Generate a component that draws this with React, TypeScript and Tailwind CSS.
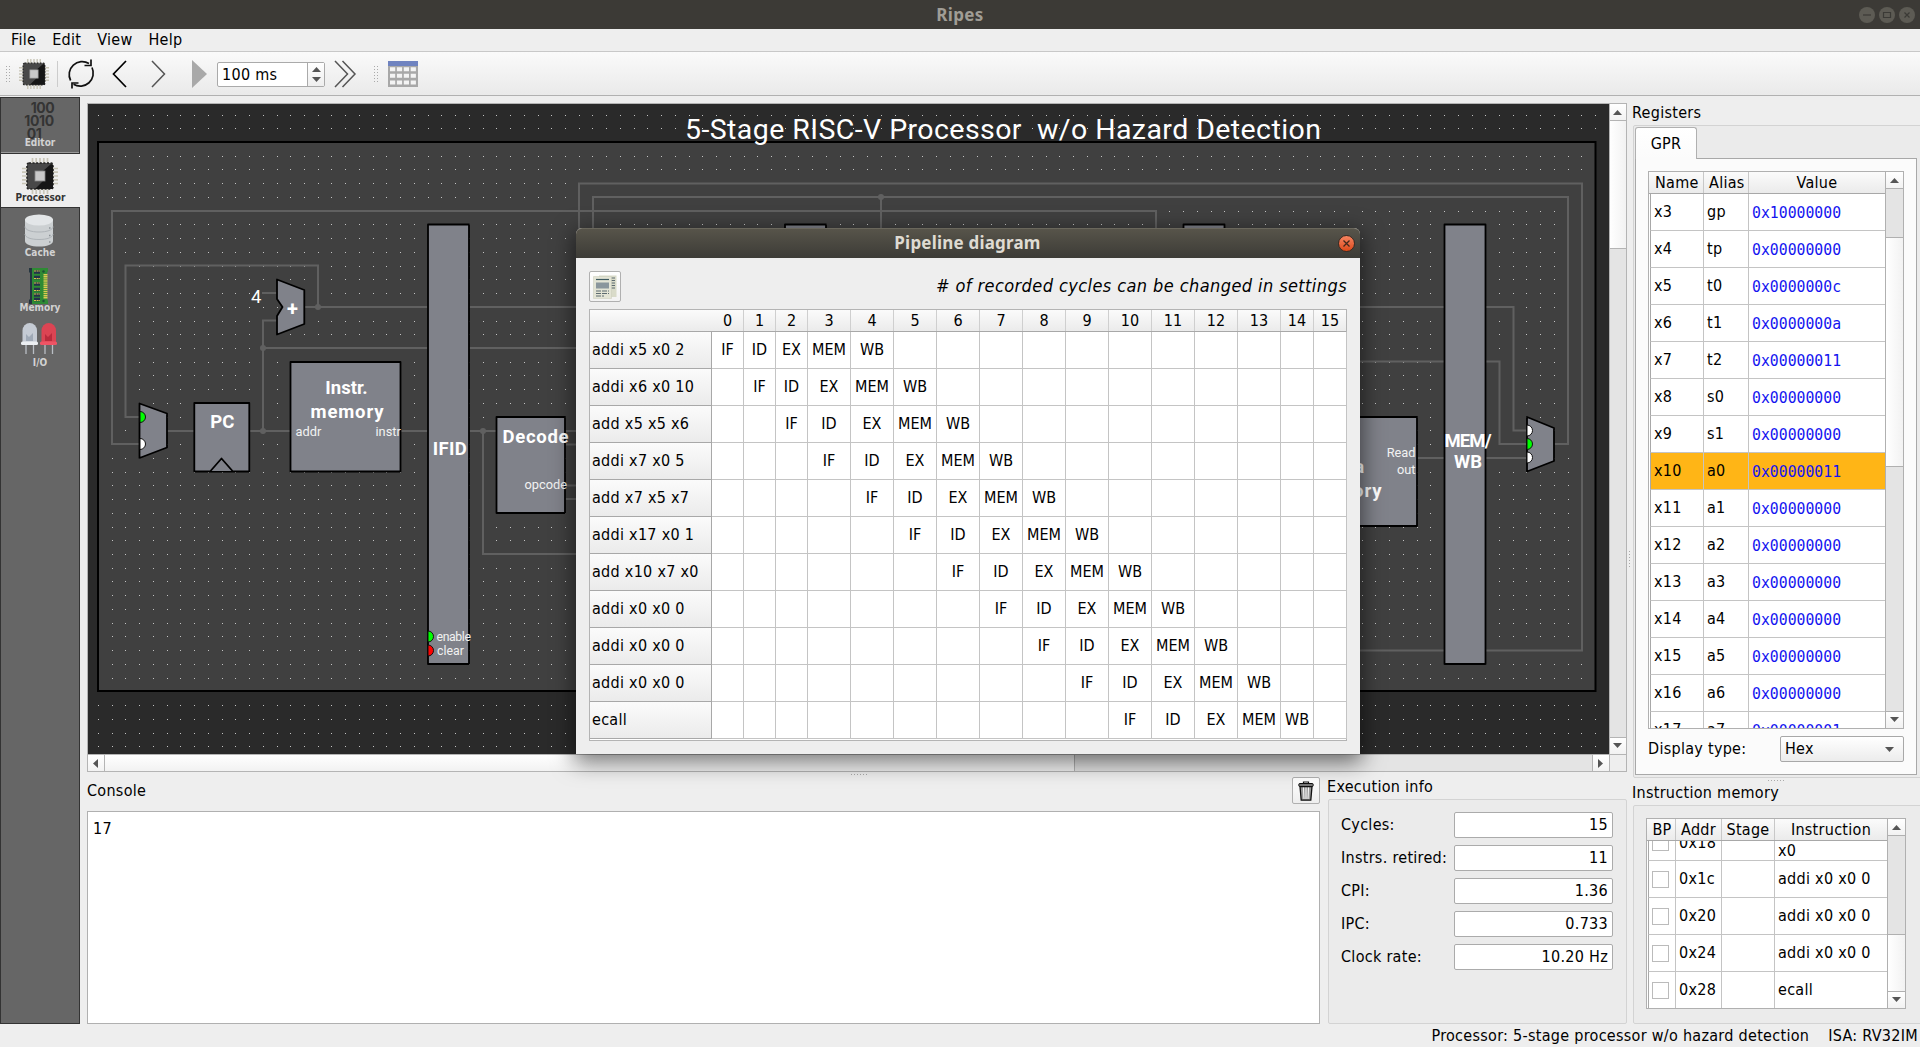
import React from "react";

const UI = "font-['DejaVu_Sans_Condensed','DejaVu_Sans',sans-serif] [font-stretch:condensed] tracking-[.29px]";

const STAGES = ["IF", "ID", "EX", "MEM", "WB"];
const INSTRUCTIONS = [
  "addi x5 x0 2",
  "addi x6 x0 10",
  "add x5 x5 x6",
  "addi x7 x0 5",
  "add x7 x5 x7",
  "addi x17 x0 1",
  "add x10 x7 x0",
  "addi x0 x0 0",
  "addi x0 x0 0",
  "addi x0 x0 0",
  "ecall",
];
const REGISTERS: [string, string, string][] = [
  ["x3", "gp", "0x10000000"],
  ["x4", "tp", "0x00000000"],
  ["x5", "t0", "0x0000000c"],
  ["x6", "t1", "0x0000000a"],
  ["x7", "t2", "0x00000011"],
  ["x8", "s0", "0x00000000"],
  ["x9", "s1", "0x00000000"],
  ["x10", "a0", "0x00000011"],
  ["x11", "a1", "0x00000000"],
  ["x12", "a2", "0x00000000"],
  ["x13", "a3", "0x00000000"],
  ["x14", "a4", "0x00000000"],
  ["x15", "a5", "0x00000000"],
  ["x16", "a6", "0x00000000"],
  ["x17", "a7", "0x00000001"],
];
const INFO: [string, string][] = [
  ["Cycles:", "15"],
  ["Instrs. retired:", "11"],
  ["CPI:", "1.36"],
  ["IPC:", "0.733"],
  ["Clock rate:", "10.20 Hz"],
];
const MEMORY: [string, string][] = [
  ["0x1c", "addi x0 x0 0"],
  ["0x20", "addi x0 x0 0"],
  ["0x24", "addi x0 x0 0"],
  ["0x28", "ecall"],
];

function Arrow({ dir }: { dir: "up" | "down" | "left" | "right" }) {
  const d = {
    up: "M0 5 L4.5 0 L9 5Z",
    down: "M0 0 L9 0 L4.5 5Z",
    left: "M5 0 L5 9 L0 4.5Z",
    right: "M0 0 L5 4.5 L0 9Z",
  }[dir];
  const vertical = dir === "up" || dir === "down";
  return (
    <svg width={vertical ? 9 : 5} height={vertical ? 5 : 9} fill="#555">
      <path d={d} />
    </svg>
  );
}

function Chip({ size }: { size: number }) {
  return (
    <svg width={size} height={size} viewBox="0 0 36 36">
      <path
        d="M10.5 0V36M14.2 0V36M18 0V36M21.8 0V36M25.5 0V36M0 10.5H36M0 14.2H36M0 18H36M0 21.8H36M0 25.5H36"
        stroke="#c9c6b8"
        strokeWidth="1.7"
      />
      <path
        d="M7 5H29A2 2 0 0 1 31 7V29A2 2 0 0 1 29 31H7A2 2 0 0 1 5 29V7A2 2 0 0 1 7 5Z"
        fill="#484848"
        stroke="#222"
        strokeWidth="1.6"
        strokeDasharray="2 1.6"
      />
      <path d="M31 7V31H13L21 23V13L29 6Z" fill="#161616" />
      <rect x="13" y="13" width="10" height="10" fill="#c9c9c9" stroke="#888" strokeWidth=".8" />
    </svg>
  );
}

function CacheIcon() {
  return (
    <svg width="36" height="36" viewBox="0 0 36 36">
      <path d="M4 6V28C4 31.500 10 33.500 18 33.500S32 31.500 32 28V6Z" fill="#ccd0d2" />
      <path d="M4 13.500C4 17 10 19 18 19S32 17 32 13.500M4 21C4 24.500 10 26.500 18 26.500S32 24.500 32 21" fill="none" stroke="#aeb3b7" strokeWidth="1" />
      <ellipse cx="18" cy="7" rx="14" ry="5.500" fill="#e3e6e8" />
      <path d="M28 15h1.500M28 22.500h1.500M28 29h1.500" stroke="#8b9196" strokeWidth="1.400" />
    </svg>
  );
}

function MemoryIcon() {
  return (
    <svg width="36" height="36" viewBox="0 0 36 36">
      <path d="M8 0H11V36H8V32L9 31V5L8 4Z" fill="#253540" />
      <path d="M11 0H27V3L26 5V31L27 33V36H11Z" fill="#2e8a34" />
      <path d="M13 4H19M13 9.500H19M13 16H19M13 21.500H19M13 27H19M13 31.500H19" stroke="#24324a" strokeWidth="3.600" />
      <path d="M13 3H19M13 10.500H19M13 15H19M13 22.500H19M13 26H19M13 32.500H19" stroke="#d9c04f" strokeWidth="1.100" strokeDasharray="2 .6" />
      <path d="M24.500 6V31" stroke="#dcc952" strokeWidth="4" strokeDasharray="1.400 .7" />
      <circle cx="22.500" cy="3.500" r="1.200" fill="#1f4d35" />
      <circle cx="22.500" cy="33" r="1.200" fill="#1f4d35" />
    </svg>
  );
}

function IoIcon() {
  return (
    <svg width="36" height="36" viewBox="0 0 36 36">
      <path d="M5 21V31M12.500 21V31M24 21V31M31.500 21V31" stroke="#b9bec4" strokeWidth="1.300" />
      <path d="M1.500 20V7.500A7.250 7.500 0 0 1 16 7.500V20Z" fill="#c5cbd4" />
      <path d="M5 18V11L8 14L12 10V18Z" fill="#9fa9b6" />
      <rect x="0" y="18.500" width="17" height="3.500" rx="1.500" fill="#eceff2" />
      <path d="M20.500 20V7.500A7.250 7.500 0 0 1 35 7.500V20Z" fill="#dc4453" />
      <path d="M24 18V11L27 14L31 10V18Z" fill="#b92b3c" />
      <rect x="19" y="18.500" width="17" height="3.500" rx="1.500" fill="#ee5465" />
    </svg>
  );
}

function EditorIcon() {
  return (
    <div className="flex h-9 w-9 flex-col items-center font-[Inter,sans-serif] text-[14px] leading-[13px] font-bold tracking-[-0.4px] whitespace-pre text-[#343434]">
      <div className="-mt-0.5 pl-[7px]">100</div>
      <div>1010</div>
      <div className="pr-[10px]">01</div>
    </div>
  );
}

function Sidebar() {
  const items: [string, React.ReactNode][] = [
    ["Editor", <EditorIcon key="e" />],
    ["Processor", <Chip key="p" size={36} />],
    ["Cache", <CacheIcon key="c" />],
    ["Memory", <MemoryIcon key="m" />],
    ["I/O", <IoIcon key="i" />],
  ];
  return (
    <div className="mt-px h-[927px] w-20 border border-[#333] bg-[#666]">
      {items.map(([label, icon]) => (
        <div
          key={label}
          className={
            "flex h-[55px] flex-col items-center pr-0.5 " +
            (label === "Processor"
              ? "-mr-px border-y border-b-[#333] border-t-[#333] bg-[#eee] pt-[4px] text-[#333]"
              : label === "Editor"
                ? "border-b border-b-[#999] pt-[5px] text-[#d2d2d2]"
                : "pt-[5px] text-[#d2d2d2]")
          }
        >
          {icon}
          <div className="-mt-[2px] ml-[2px] font-['DejaVu_Sans',sans-serif] text-[10px] leading-3 font-bold tracking-normal">
            {label}
          </div>
        </div>
      ))}
    </div>
  );
}

function Handle() {
  return (
    <svg width="5" height="17" viewBox="0 0 5 17">
      <path d="M.5 0V17M3.500 0V17" stroke="#aaa" strokeDasharray="1 2" />
    </svg>
  );
}

function Toolbar() {
  return (
    <div className="flex h-[45px] items-center border-t border-b border-t-[#c8c8c8] border-b-[#b1b1b1] bg-linear-to-b from-[#fafafa] to-[#eaeaea] pt-px pl-1.5">
      <Handle />
      <div className="ml-2 flex w-[30px]">
        <Chip size={30} />
      </div>
      <div className="ml-2 h-[26px] w-px bg-[#ccc]" />
      <svg className="ml-[9px]" width="29" height="30" viewBox="0 0 29 30" fill="none" stroke="#111" strokeWidth="1.700">
        <path d="M3.600 21.500A13 13 0 0 1 22 4.500M25 8.500A13 13 0 0 1 6.500 25.200" />
        <path d="M24 .5V6.500H17.500M5 29.500V24H11.500" />
      </svg>
      <svg className="ml-4" width="15" height="28" viewBox="0 0 15 28" fill="none" stroke="#000" strokeWidth="1.700">
        <path d="M14 1L1.500 14L14 27" />
      </svg>
      <svg className="ml-6" width="15" height="28" viewBox="0 0 15 28" fill="none" stroke="#555" strokeWidth="1.500">
        <path d="M1 1L13.500 14L1 27" />
      </svg>
      <svg className="ml-[25px]" width="16" height="28" viewBox="0 0 16 28" fill="#a9a9a9">
        <path d="M1 0L16 14L1 28Z" />
      </svg>
      <div className="ml-[10px] flex h-[25px] w-[108px] items-center rounded-[2px] border border-[#aaa] bg-white text-[16px] leading-none">
        <span className="flex-1 pt-px pl-1">100 ms</span>
        <div className="flex h-full w-[17px] flex-col items-center justify-center gap-[5px] border-l border-[#aaa] bg-linear-to-b from-white to-[#eee]">
          <Arrow dir="up" />
          <Arrow dir="down" />
        </div>
      </div>
      <svg className="ml-[9px]" width="23" height="28" viewBox="0 0 23 28" fill="none" stroke="#555" strokeWidth="1.500">
        <path d="M1 1L13.500 14L1 27M8.500 1L21 14L8.500 27" />
      </svg>
      <div className="ml-[17px] flex">
        <Handle />
      </div>
      <svg className="ml-[9px]" width="30" height="26" viewBox="0 0 30 26">
        <rect width="30" height="26" fill="#a8a8a8" />
        <rect width="30" height="5" fill="#6f83c0" />
        <path d="M2 8.300H28M2 14.800H28M2 21.500H28" stroke="#f4f4f4" strokeWidth="4" strokeDasharray="5.200 1.700" />
      </svg>
    </div>
  );
}

/* Processor schematic */
const PITCH = 13.735;
let gridPath = "";
for (let r = 0; r < 47; r++) {
  if (r === 2 || r === 42) continue;
  for (let c = 0; c < 110; c++) {
    const inside = r > 2 && r < 42;
    if (inside && (c < 1 || c > 108)) continue;
    gridPath += `M${Math.floor(98.5 + c * PITCH)} ${Math.floor(115 + r * PITCH) + 0.5}h1`;
  }
}

function Port({ x, y, fill }: { x: number; y: number; fill: string }) {
  return <path d={`M${x} ${y - 5.5}A5.5 5.5 0 0 1 ${x} ${y + 5.5}Z`} fill={fill} stroke="#111" strokeWidth="1" />;
}

function Schematic() {
  return (
    <svg
      width="1521"
      height="650"
      viewBox="88 104 1521 650"
      className="block bg-[#2a2a2a] font-[Roboto,sans-serif] tracking-normal [font-stretch:normal]"
      fill="none"
    >
      <rect x="98" y="142" width="1497.500" height="549" fill="#404040" stroke="#000" strokeWidth="2" />
      <path d={gridPath} stroke="#c4c4c4" strokeWidth="1" shapeRendering="crispEdges" />
      <g stroke="#606060" strokeWidth="2">
        <path d="M140 444H112V211H1156V240" />
        <path d="M140 417H125.500V265.500H318V307" />
        <path d="M167 431H194M249 431H291M263 431V320.500H277M263 348H600M262 293H277M304 307H600M400 431H497" />
        <path d="M483 431V554H600M565 431H600M565 444.500H600M565 485.500H600M565 499H600" />
        <path d="M579 240V183.500H1582V650.500H1350" />
        <path d="M593 240V197H1568V444H1554M881 197V240" />
        <path d="M1350 307H1513.500V430.500H1527M1350 361.500H1499.500V444H1527M1417 458H1527" />
      </g>
      <g fill="#606060">
        <circle cx="318" cy="307" r="3" />
        <circle cx="263" cy="348" r="3" />
        <circle cx="263" cy="431" r="3" />
        <circle cx="483" cy="431" r="3" />
        <circle cx="881" cy="197" r="3" />
      </g>
      <g fill="#80828a" stroke="#000" strokeWidth="1.800" strokeLinejoin="round">
        <path d="M139.500 403.500L167 413.500V447.500L139.500 458Z" />
        <rect x="194.300" y="403" width="55" height="68.500" />
        <path d="M210.500 471L221.500 458.500L232.500 471" />
        <path d="M277 279.500L304.300 290V324L277 334.500V316L282.500 307L277 299Z" />
        <rect x="290.500" y="362" width="110" height="109.500" />
        <rect x="428" y="224.500" width="41" height="439.500" />
        <rect x="496.500" y="417" width="68.500" height="96" />
        <rect x="785" y="224.500" width="41" height="439.500" />
        <rect x="1183.500" y="224.500" width="41" height="439.500" />
        <rect x="1307" y="417" width="110" height="109" />
        <rect x="1444.500" y="224.500" width="41" height="439.500" />
        <path d="M1527 417L1554 428V461L1527 471.500Z" />
      </g>
      <Port x={140} y={417} fill="#0f0" />
      <Port x={140} y={444} fill="#fff" />
      <Port x={428} y={636.5} fill="#0f0" />
      <Port x={428} y={650.5} fill="#f00" />
      <Port x={1527} y={430.5} fill="#fff" />
      <Port x={1527} y={444} fill="#0f0" />
      <Port x={1527} y={457.5} fill="#fff" />
      <g fill="#fff" fontSize="18.500" fontWeight="700" textAnchor="middle">
        <text x="222.300" y="427.500">PC</text>
        <text x="346.500" y="393.800">Instr.</text>
        <text x="347" y="418" textLength="73">memory</text>
        <text x="449.800" y="454.800" textLength="34">IFID</text>
        <text x="535.500" y="442.500" textLength="66">Decode</text>
        <text x="1345" y="472.500">Data</text>
        <text x="1345" y="496.800" textLength="73">memory</text>
        <text x="1468" y="447" textLength="47">MEM/</text>
        <text x="1468" y="468">WB</text>
        <text x="292.500" y="316" fontSize="20">+</text>
        <text x="256.300" y="302.800" fontWeight="400">4</text>
      </g>
      <g fill="#f2f2f2" fontSize="12.800">
        <text x="295.500" y="436">addr</text>
        <text x="375.500" y="436">instr</text>
        <text x="524.500" y="489" textLength="42.500">opcode</text>
        <text x="436.500" y="641" textLength="34.500" fontSize="12.300">enable</text>
        <text x="437" y="655" fontSize="12.300">clear</text>
        <text x="1415.500" y="457" textAnchor="end">Read</text>
        <text x="1415.500" y="474" textAnchor="end">out</text>
      </g>
      <text x="685" y="138.500" fill="#fff" fontSize="28.500" textLength="636" xmlSpace="preserve" className="whitespace-pre">
        {"5-Stage RISC-V Processor  w/o Hazard Detection"}
      </text>
    </svg>
  );
}

const BTN = "flex shrink-0 items-center justify-center bg-linear-to-b from-white to-[#f2f2f2]";

function Canvas() {
  return (
    <div className="h-[669px] w-[1540px] border border-[#b4b4b4]">
      <div className="flex h-[650px]">
        <div className="w-[1521px]">
          <Schematic />
        </div>
        <div className="flex w-[17px] flex-col border-l border-[#b4b4b4] bg-[#e4e4e4]">
          <div className={BTN + " h-4 pr-px"}>
            <Arrow dir="up" />
          </div>
          <div className="h-[129px] border-y border-[#b4b4b4] bg-linear-to-r from-white to-[#f2f2f2]" />
          <div className="flex-1" />
          <div className={BTN + " h-[17px] border-t border-[#b4b4b4] pr-px pb-0.5"}>
            <Arrow dir="down" />
          </div>
        </div>
      </div>
      <div className="flex h-[17px] border-t border-[#b4b4b4] bg-[#e4e4e4]">
        <div className={BTN + " w-4 pr-0.5"}>
          <Arrow dir="left" />
        </div>
        <div className="w-[971px] border-x border-[#b4b4b4] bg-linear-to-b from-white to-[#f2f2f2]" />
        <div className="flex-1" />
        <div className={BTN + " w-[17px] border-l border-[#b4b4b4] pr-px"}>
          <Arrow dir="right" />
        </div>
        <div className="w-[17px] border-l border-[#b4b4b4] bg-[#eee]" />
      </div>
    </div>
  );
}

function Console() {
  return (
    <div className="w-[1233px]">
      <div className="flex h-[34px] items-start justify-between">
        <span className="leading-[27px]">Console</span>
        <div className="flex h-[27px] w-7 items-center justify-center rounded-[2px] border border-[#b0b0b0] bg-linear-to-b from-white to-[#eee]">
          <svg width="16" height="20" viewBox="0 0 16 20">
            <path d="M5.500 2.500V1H10.500V2.500" fill="none" stroke="#111" strokeWidth="1.200" />
            <path d="M2 5.500L3.200 19.200H12.800L14 5.500Z" fill="#999" stroke="#111" strokeWidth="1.300" />
            <path d="M5.500 6.500L6 18M8 6.500V18M10.500 6.500L10 18" stroke="#fff" strokeWidth="1" />
            <rect x=".8" y="2.500" width="14.400" height="3" rx="1" fill="#777" stroke="#111" strokeWidth="1" />
          </svg>
        </div>
      </div>
      <div className="h-[213px] border border-[#b0b0b0] bg-white px-[5px] pt-[7px] leading-5">17</div>
    </div>
  );
}

function ExecutionInfo() {
  return (
    <div className="w-[299px]">
      <div className="-ml-px h-[22px] leading-5">Execution info</div>
      <div className="flex h-[225px] flex-col gap-[7px] rounded-[2px] border border-[#d3d3d3] bg-[#ebebeb] pt-3 pr-[13px] pl-3">
        {INFO.map(([label, value]) => (
          <div key={label} className="flex h-[26px] items-center justify-between">
            <span>{label}</span>
            <span className="flex h-[26px] w-[159px] items-center justify-end rounded-[2px] border border-[#ababab] bg-white pr-1">
              {value}
            </span>
          </div>
        ))}
      </div>
    </div>
  );
}

const HEAD = "bg-linear-to-b from-[#fbfbfb] to-[#ebebeb]";

function Registers() {
  return (
    <div className="mt-0.5 h-[653px] w-[290px] rounded-[2px] border border-[#d3d3d3] bg-[#ebebeb] px-px pt-px">
      <div className="relative z-10 flex h-8 w-[62px] items-center justify-center rounded-t-[3px] border border-b-0 border-[#b0b0b0] bg-linear-to-b from-white to-[#fbfbfb]">
        GPR
      </div>
      <div className="-mt-px h-[617px] w-[282px] border border-[#a8a8a8] bg-[#fbfbfb] px-3 pt-3">
        <div className="flex h-[558px] w-64 overflow-hidden border border-[#b0b0b0] bg-white">
          <div className="w-[237px] shrink-0 border-r border-[#b0b0b0]">
            <div className={"flex h-[22px] border-b border-[#a8a8a8] leading-[21px] " + HEAD}>
              <div className="w-[55px] border-r border-[#c8c8c8] pl-[6px]">Name</div>
              <div className="w-[45px] border-r border-[#c8c8c8] pl-[5px]">Alias</div>
              <div className="flex-1 text-center">Value</div>
            </div>
            {REGISTERS.map(([n, a, v]) => (
              <div
                key={n}
                className={"ml-px flex h-[37px] border-b border-l border-b-[#c4c4c4] border-l-[#a8a8a8] leading-[36px] " + (n === "x10" ? "bg-[#ffb516]" : "bg-white")}
              >
                <div className="w-[53px] border-r border-[#c4c4c4] pl-[3px]">{n}</div>
                <div className="w-[45px] border-r border-[#c4c4c4] pl-[3px]">{a}</div>
                <div className="flex-1 pt-px pl-[3px] leading-[35px]">
                  <span className="inline-block origin-left scale-x-[.925] font-['DejaVu_Sans_Mono',monospace] text-[16px] tracking-normal [font-stretch:normal] text-[#1414f0]">
                    {v}
                  </span>
                </div>
              </div>
            ))}
          </div>
          <div className="flex w-[17px] flex-col bg-[#e4e4e4]">
            <div className={BTN + " h-[17px] border-b border-[#b0b0b0]"}>
              <Arrow dir="up" />
            </div>
            <div className="h-12" />
            <div className="h-[230px] border-y border-[#b0b0b0] bg-linear-to-r from-white to-[#f2f2f2]" />
            <div className="flex-1" />
            <div className={BTN + " h-[17px] border-t border-[#b0b0b0] pb-px"}>
              <Arrow dir="down" />
            </div>
          </div>
        </div>
        <div className="mt-[7px] flex items-center justify-between">
          <span>Display type:</span>
          <div className="flex h-[26px] w-[124px] items-center justify-between rounded-[2px] border border-[#a8a8a8] bg-linear-to-b from-white to-[#ececec] pr-[9px] pl-1">
            <span>Hex</span>
            <Arrow dir="down" />
          </div>
        </div>
      </div>
    </div>
  );
}

function InstructionMemory() {
  const cell = "border-r border-[#c4c4c4]";
  return (
    <div className="h-[219px] w-[290px] rounded-[2px] border border-[#d3d3d3] bg-[#ebebeb] pt-3 pl-3">
      <div className="flex h-[191px] w-[260px] border border-[#b0b0b0] bg-white">
        <div className="w-[241px] shrink-0 overflow-hidden border-r border-[#b0b0b0]">
          <div className={"flex h-[22px] border-b border-[#a8a8a8] text-center leading-[21px] " + HEAD}>
            <div className="w-[29px] border-r border-[#c8c8c8] pl-0.5">BP</div>
            <div className="w-[46px] border-r border-[#c8c8c8]">Addr</div>
            <div className="w-[53px] border-r border-[#c8c8c8]">Stage</div>
            <div className="flex-1">Instruction</div>
          </div>
          <div className="ml-px flex h-5 overflow-hidden border-b border-l border-b-[#c4c4c4] border-l-[#a8a8a8]">
            <div className={"w-[27px] pl-[3px] " + cell}>
              <div className="-mt-[7px] h-[17px] w-[17px] border border-[#bbb]" />
            </div>
            <div className={"w-[46px] pl-[3px] " + cell}>
              <div className="-mt-2 leading-5">0x18</div>
            </div>
            <div className={"w-[53px] " + cell} />
            <div className="pl-[3px] leading-5">x0</div>
          </div>
          {MEMORY.map(([addr, text]) => (
            <div key={addr} className="ml-px flex h-[37px] border-b border-l border-b-[#c4c4c4] border-l-[#a8a8a8] leading-[35px]">
              <div className={"flex w-[27px] items-center pl-[3px] " + cell}>
                <div className="h-[17px] w-[17px] border border-[#bbb] bg-white" />
              </div>
              <div className={"w-[46px] pl-[3px] " + cell}>{addr}</div>
              <div className={"w-[53px] " + cell} />
              <div className="pl-[3px]">{text}</div>
            </div>
          ))}
        </div>
        <div className="flex w-[17px] flex-col bg-[#e4e4e4]">
          <div className={BTN + " h-[17px] border-b border-[#b0b0b0]"}>
            <Arrow dir="up" />
          </div>
          <div className="flex-1" />
          <div className="h-[57px] border-t border-[#b0b0b0] bg-linear-to-r from-white to-[#f2f2f2]" />
          <div className={BTN + " h-[17px] border-t border-[#b0b0b0] pb-px"}>
            <Arrow dir="down" />
          </div>
        </div>
      </div>
    </div>
  );
}

const GRID =
  "grid grid-cols-[122px_32px_32px_32px_43px_43px_43px_43px_43px_43px_43px_43px_43px_43px_43px_33px_33px]";

function PipelineDialog() {
  return (
    <div className="absolute top-[228px] left-[576px] h-[526px] w-[784px] rounded-t-[6px] bg-[#eee] shadow-[0_6px_22px_2px_rgba(0,0,0,0.55)]">
      <div className="flex h-[30px] items-center justify-center rounded-t-[6px] border-t border-[#6a675c] bg-linear-to-b from-[#57544a] to-[#3d3c37]">
        <span className="-mt-px flex-1 pl-[21px] text-center font-['Noto_Sans',sans-serif] text-[17px] leading-6 font-bold tracking-[.2px] [font-stretch:normal] text-[#dfdbd2]">
          Pipeline diagram
        </span>
        <div className="mr-[5px] flex h-[17px] w-[17px] items-center justify-center rounded-full border border-[#3a2a22] bg-linear-to-b from-[#f6845f] to-[#dd4814]">
          <svg width="7" height="7" viewBox="0 0 7 7">
            <path d="M.5 .5L6.500 6.500M6.500 .5L.5 6.500" stroke="#43281c" strokeWidth="1.300" />
          </svg>
        </div>
      </div>
      <div className="flex h-[51px] items-start justify-between pt-[13px] pr-[13px] pl-[13px]">
        <div className="flex h-[31px] w-8 items-center justify-center rounded-[2px] border border-[#b0b0b0] bg-linear-to-b from-white to-[#f2f2f2]">
          <svg width="24" height="24" viewBox="0 0 24 24">
            <path d="M6 .5H23.500V22H6Z" fill="#d9dbc9" />
            <path d="M18 3H22M18 5.500H22M18 8H22M18 10.500H22M18 13H22" stroke="#5d6b70" />
            <path d="M.5 1.500H18.500V23.500H.5Z" fill="#e3e4d5" stroke="#c9cab8" strokeWidth=".5" />
            <path d="M3 4.500H16" stroke="#3d5960" strokeWidth="1.200" />
            <path d="M3 8.500H16M3 10.500H16M3 12.500H16" stroke="#8a969c" strokeWidth="1.800" />
            <path d="M3 16H16M3 18.500H16M3 21H11" stroke="#5d6b70" strokeDasharray="5 1" />
          </svg>
        </div>
        <span className="text-[18px] leading-[30px] tracking-[.41px] italic"># of recorded cycles can be changed in settings</span>
      </div>
      <div className="mx-[13px] h-[432px] border border-[#b4b4b4] bg-white">
        <div className={GRID + " h-[22px] border-b border-[#a8a8a8] text-center leading-[21px] tracking-normal " + HEAD}>
          <div />
          {Array.from({ length: 16 }, (_, i) => (
            <div key={i} className="border-r border-[#cfcfcf] last:border-r-[#b4b4b4]">
              {i}
            </div>
          ))}
        </div>
        {INSTRUCTIONS.map((text, row) => (
          <div key={row} className={GRID + " h-[37px] leading-[35px]"}>
            <div className={"h-[37px] border-r border-b border-[#a8a8a8] pl-0.5 leading-[36px] " + HEAD}>{text}</div>
            {Array.from({ length: 16 }, (_, i) => (
              <div key={i} className="h-[37px] border-r border-b border-[#c4c4c4] text-center tracking-normal">
                {STAGES[i - row] ?? ""}
              </div>
            ))}
          </div>
        ))}
      </div>
    </div>
  );
}

function WindowButtons() {
  return (
    <div className="flex gap-1 pt-px pr-[5px]">
      {["M4 8H12", "M4.500 5.500H11.500V10.500H4.500Z", "M5.500 5.500L10.500 10.500M10.500 5.500L5.500 10.500"].map((d) => (
        <svg key={d} width="16" height="16" viewBox="0 0 16 16">
          <circle cx="8" cy="8" r="8" fill="#5d5b54" />
          <path d={d} fill="none" stroke="#3b3a36" strokeWidth="1.200" />
        </svg>
      ))}
    </div>
  );
}

export default function App() {
  return (
    <div className={"relative flex h-[1047px] w-[1920px] flex-col overflow-hidden bg-[#eee] text-[16px] text-black " + UI}>
      <header className="flex h-[29px] items-center justify-between bg-[#3c3a36]">
        <div className="w-[61px]" />
        <span className="pt-px font-['Noto_Sans',sans-serif] text-[17px] leading-6 font-bold tracking-[.35px] [font-stretch:normal] text-[#a09d95]">
          Ripes
        </span>
        <WindowButtons />
      </header>
      <nav className="flex h-[22px] items-center gap-4 pl-[11px] leading-5">
        <span>File</span>
        <span>Edit</span>
        <span>View</span>
        <span>Help</span>
      </nav>
      <Toolbar />
      <main className="flex h-[928px]">
        <Sidebar />
        <div className="ml-[7px] w-[1540px] pt-[7px]">
          <Canvas />
          <div className="flex h-[5px] items-center justify-center pl-1">
            <svg width="16" height="1">
              <path d="M0 .5H16" stroke="#aaa" strokeDasharray="1 2" />
            </svg>
          </div>
          <div className="flex justify-between">
            <Console />
            <ExecutionInfo />
          </div>
        </div>
        <div className="flex w-[5px] items-center justify-center">
          <svg className="mb-0.5" width="1" height="17">
            <path d="M.5 0V17" stroke="#aaa" strokeDasharray="1 2" />
          </svg>
        </div>
        <div className="w-72 shrink-0 overflow-hidden pt-1.5">
          <div className="h-[21px] leading-[22px]">Registers</div>
          <div className="ml-px">
            <Registers />
          </div>
          <div className="flex h-[5px] items-center justify-center">
            <svg width="16" height="1">
              <path d="M0 .5H16" stroke="#aaa" strokeDasharray="1 2" />
            </svg>
          </div>
          <div className="h-[22px] leading-5">Instruction memory</div>
          <div className="ml-px">
            <InstructionMemory />
          </div>
        </div>
      </main>
      <footer className="flex h-[23px] items-center justify-end gap-[19px] pr-0.5 leading-5 whitespace-nowrap">
        <span>Processor: 5-stage processor w/o hazard detection</span>
        <span>ISA: RV32IM</span>
      </footer>
      <PipelineDialog />
    </div>
  );
}
